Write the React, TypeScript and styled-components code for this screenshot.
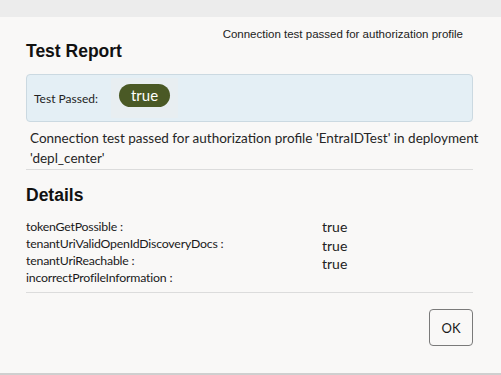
import React from 'react';
import styled, { createGlobalStyle } from 'styled-components';

const GlobalStyle = createGlobalStyle`
  html, body {
    margin: 0;
    padding: 0;
    background: #ececec;
  }
  body {
    font-family: Lato, "Liberation Sans", Arial, sans-serif;
    color: #1c1c1c;
  }
`;

const Dialog = styled.div`
  margin-top: 17px;
  height: 358px;
  box-sizing: border-box;
  background: #f9f8f7;
  border-bottom: 2px solid #cfcfcf;
  padding: 0 28px 0 26px;
  display: flex;
  flex-direction: column;
`;

const Header = styled.div`
  display: flex;
  justify-content: space-between;
  align-items: flex-start;
`;

const Title = styled.h2`
  margin: 24px 0 0;
  font-family: "Liberation Sans", Arial, sans-serif;
  font-size: 17.5px;
  font-weight: 700;
  color: #111;
`;

const Toast = styled.div`
  margin: 11px 10px 0 0;
  font-family: "Liberation Sans", Arial, sans-serif;
  font-size: 11.5px;
  color: #222;
`;

const StatusBox = styled.div`
  margin-top: 12px;
  height: 48px;
  box-sizing: border-box;
  background: #e4eff5;
  border: 1px solid #cbd9e1;
  border-radius: 4px;
  display: flex;
  align-items: center;
  padding-left: 7px;
  gap: 13px;
`;

const StatusLabel = styled.span`
  font-size: 12px;
  color: #222;
`;

const PillWrap = styled.div`
  background: #e8eef1;
  padding: 6px 8px 11px;
`;

const Pill = styled.span`
  display: inline-block;
  background: #4a5925;
  color: #fff;
  border-radius: 12px;
  padding: 3px 12px 4px;
  font-size: 15px;
  line-height: 16px;
`;

const Message = styled.p`
  margin: 6px -16px 0 4px;
  font-size: 13.5px;
  line-height: 20px;
  color: #262626;
`;

const Divider = styled.hr`
  border: 0;
  border-top: 1px solid #dcdcdc;
  margin: 1px 0 0;
`;

const SectionTitle = styled.h3`
  margin: 15px 0 0;
  font-family: "Liberation Sans", Arial, sans-serif;
  font-size: 17.5px;
  font-weight: 700;
  color: #111;
`;

const Details = styled.div`
  margin: 12px 0 5px;
  display: grid;
  grid-template-columns: 296px 1fr;
`;

const KeyColumn = styled.div`
  display: flex;
  flex-direction: column;
`;

const ValueColumn = styled.div`
  display: flex;
  flex-direction: column;
`;

const Key = styled.div`
  font-size: 12.3px;
  letter-spacing: -0.2px;
  line-height: 17px;
  color: #1a1a1a;
`;

const Value = styled.div`
  font-size: 14px;
  line-height: 18.5px;
  color: #222;
`;

const Footer = styled.div`
  display: flex;
  justify-content: flex-end;
  padding-top: 16px;
`;

const OkButton = styled.button`
  width: 44px;
  height: 37px;
  background: #f9f8f7;
  border: 1px solid #7a7a7a;
  border-radius: 4px;
  font-family: Lato, "Liberation Sans", Arial, sans-serif;
  font-size: 13px;
  color: #1a1a1a;
`;

const details: [string, string][] = [
  ['tokenGetPossible :', 'true'],
  ['tenantUriValidOpenIdDiscoveryDocs :', 'true'],
  ['tenantUriReachable :', 'true'],
  ['incorrectProfileInformation :', ''],
];

export default function App() {
  return (
    <>
      <GlobalStyle />
      <Dialog>
        <Header>
          <Title>Test Report</Title>
          <Toast>Connection test passed for authorization profile</Toast>
        </Header>
        <StatusBox>
          <StatusLabel>Test Passed:</StatusLabel>
          <PillWrap>
            <Pill>true</Pill>
          </PillWrap>
        </StatusBox>
        <Message>
          Connection test passed for authorization profile 'EntraIDTest' in deployment 'depl_center'
        </Message>
        <Divider />
        <SectionTitle>Details</SectionTitle>
        <Details>
          <KeyColumn>
            {details.map(([k]) => (
              <Key key={k}>{k}</Key>
            ))}
          </KeyColumn>
          <ValueColumn>
            {details.filter(([, v]) => v).map(([k, v]) => (
              <Value key={k}>{v}</Value>
            ))}
          </ValueColumn>
        </Details>
        <Divider />
        <Footer>
          <OkButton>OK</OkButton>
        </Footer>
      </Dialog>
    </>
  );
}
